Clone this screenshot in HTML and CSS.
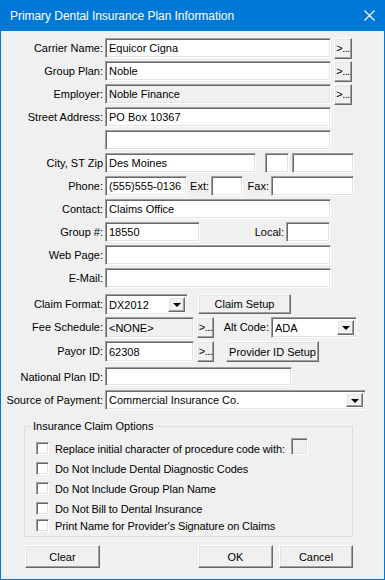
FILE: index.html
```html
<!DOCTYPE html>
<html lang="en">
<head>
    <meta charset="UTF-8">
    <title>Primary Dental Insurance Plan Information</title>
    <link rel="stylesheet" href="styles.css">
</head>
<body>
    <div class="window">
        <div class="titlebar">
            <span class="title">Primary Dental Insurance Plan Information</span>
            <svg class="close" width="11" height="11" viewBox="0 0 11 11">
                <path d="M0.5 0.5L10.5 10.5M10.5 0.5L0.5 10.5" stroke="#fff" stroke-width="1.1" fill="none"/>
            </svg>
        </div>

        <div class="content">
            <div class="row">
                <span class="lbl">Carrier Name:</span>
                <div class="field w-wide">Equicor Cigna</div>
                <div class="btn more">&gt;...</div>
            </div>
            <div class="row">
                <span class="lbl">Group Plan:</span>
                <div class="field w-wide">Noble</div>
                <div class="btn more">&gt;...</div>
            </div>
            <div class="row">
                <span class="lbl">Employer:</span>
                <div class="field w-wide disabled">Noble Finance</div>
                <div class="btn more">&gt;...</div>
            </div>
            <div class="row">
                <span class="lbl">Street Address:</span>
                <div class="field w-wide">PO Box 10367</div>
            </div>
            <div class="row">
                <span class="lbl"></span>
                <div class="field w-wide"></div>
            </div>
            <div class="row">
                <span class="lbl">City, ST Zip</span>
                <div class="field w-city">Des Moines</div>
                <div class="field w-st"></div>
                <div class="field w-zip"></div>
            </div>
            <div class="row">
                <span class="lbl">Phone:</span>
                <div class="field w-phone">(555)555-0136</div>
                <span class="ilbl l-ext">Ext:</span>
                <div class="field w-ext"></div>
                <span class="ilbl l-fax">Fax:</span>
                <div class="field w-fax"></div>
            </div>
            <div class="row">
                <span class="lbl">Contact:</span>
                <div class="field w-wide">Claims Office</div>
            </div>
            <div class="row">
                <span class="lbl">Group #:</span>
                <div class="field w-group">18550</div>
                <span class="ilbl l-local">Local:</span>
                <div class="field w-local"></div>
            </div>
            <div class="row">
                <span class="lbl">Web Page:</span>
                <div class="field w-wide"></div>
            </div>
            <div class="row">
                <span class="lbl">E-Mail:</span>
                <div class="field w-wide"></div>
            </div>

            <div class="row r-claim">
                <span class="lbl">Claim Format:</span>
                <div class="field combo w-claim">DX2012<div class="btn drop"><span class="arrow"></span></div></div>
                <div class="btn w-setup b-claim">Claim Setup</div>
            </div>
            <div class="row r-fee">
                <span class="lbl">Fee Schedule:</span>
                <div class="field disabled w-fee">&lt;NONE&gt;</div>
                <div class="btn more sm">&gt;...</div>
                <span class="ilbl l-alt">Alt Code:</span>
                <div class="field combo w-alt">ADA<div class="btn drop"><span class="arrow"></span></div></div>
            </div>
            <div class="row r-payor">
                <span class="lbl">Payor ID:</span>
                <div class="field w-fee">62308</div>
                <div class="btn more sm">&gt;...</div>
                <div class="btn w-setup b-provider">Provider ID Setup</div>
            </div>
            <div class="row r-npi">
                <span class="lbl">National Plan ID:</span>
                <div class="field w-npi"></div>
            </div>
            <div class="row r-source">
                <span class="lbl">Source of Payment:</span>
                <div class="field combo w-source">Commercial Insurance Co.<div class="btn drop"><span class="arrow"></span></div></div>
            </div>

            <fieldset class="group">
                <legend>Insurance Claim Options</legend>
                <div class="check c1">
                    <span class="box"></span>
                    <span>Replace initial character of procedure code with:</span>
                    <div class="field w-char"></div>
                </div>
                <div class="check c2">
                    <span class="box"></span>
                    <span>Do Not Include Dental Diagnostic Codes</span>
                </div>
                <div class="check c2">
                    <span class="box"></span>
                    <span>Do Not Include Group Plan Name</span>
                </div>
                <div class="check c2">
                    <span class="box"></span>
                    <span>Do Not Bill to Dental Insurance</span>
                </div>
                <div class="check c5">
                    <span class="box"></span>
                    <span>Print Name for Provider's Signature on Claims</span>
                </div>
            </fieldset>

            <div class="actions">
                <div class="btn big b-clear">Clear</div>
                <div class="btn big b-ok">OK</div>
                <div class="btn big b-cancel">Cancel</div>
            </div>
        </div>
    </div>
</body>
</html>
```

FILE: styles.css
```css
* {
    box-sizing: border-box;
}

body {
    margin: 0;
    background: #f0f0f0;
    font-family: 'Liberation Sans', Arial, sans-serif;
    font-size: 11px;
    color: #000;
}

.window {
    width: 385px;
    height: 580px;
    border: 1px solid #0078d7;
    border-top: none;
    background: #f0f0f0;
    overflow: hidden;
}

.titlebar {
    height: 31px;
    margin: 0 -1px;
    background: #0078d7;
    color: #fff;
    display: flex;
    align-items: center;
    padding: 0 10px;
}

.title {
    flex: 1;
    font-size: 12px;
    letter-spacing: -0.05px;
}

.content {
    padding-top: 7px;
}

.row {
    display: flex;
    align-items: flex-start;
    height: 20px;
    margin-top: 3px;
}

.row:first-child {
    margin-top: 0;
}

.lbl {
    width: 104px;
    height: 100%;
    padding-right: 2px;
    text-align: right;
    line-height: 20px;
    white-space: nowrap;
}

.ilbl {
    height: 100%;
    line-height: 20px;
    text-align: right;
    padding-right: 2px;
    white-space: nowrap;
}

/* sunken edit box */
.field {
    height: 100%;
    background: #fff;
    border: 1px solid;
    border-color: #a0a0a0 #fff #fff #a0a0a0;
    box-shadow: inset 1px 1px 0 #696969, inset -1px -1px 0 #e3e3e3;
    padding: 0 3px;
    display: flex;
    align-items: center;
    white-space: nowrap;
    overflow: hidden;
    position: relative;
}

.field.disabled {
    background: #f0f0f0;
}

/* raised button */
.btn {
    background: #f0f0f0;
    border: 1px solid;
    border-color: #fff #696969 #696969 #fff;
    box-shadow: inset -1px -1px 0 #a0a0a0, inset 1px 1px 0 #e3e3e3;
    display: flex;
    align-items: center;
    justify-content: center;
    white-space: nowrap;
}

.more {
    width: 18px;
    height: 21px;
    margin-left: 3px;
    letter-spacing: -0.5px;
    padding-bottom: 1px;
}

.more.sm {
    width: 17px;
}

.w-wide { width: 226px; }
.w-city { width: 151px; }
.w-st { width: 24px; margin-left: 9px; }
.w-zip { width: 62px; margin-left: 3px; }
.w-phone { width: 82px; }
.l-ext { width: 24px; }
.w-ext { width: 32px; }
.l-fax { width: 28px; }
.w-fax { width: 83px; }
.w-group { width: 95px; }
.l-local { width: 86px; }
.w-local { width: 44px; }

.r-claim { margin-top: 6px; height: 21px; }
.r-fee { margin-top: 2px; height: 21px; }
.r-payor { margin-top: 3px; height: 21px; }
.r-npi { margin-top: 5px; height: 19px; }
.r-source { margin-top: 4px; height: 20px; }

.combo {
    padding-right: 2px;
}

.combo .drop {
    position: absolute;
    top: 2px;
    right: 2px;
    bottom: 2px;
    width: 17px;
}

.arrow {
    width: 0;
    height: 0;
    border-left: 4px solid transparent;
    border-right: 4px solid transparent;
    border-top: 4px solid #000;
    margin-top: 1px;
}

.w-claim { width: 83px; }
.w-setup { width: 93px; }
.b-claim { height: 20px; margin-left: 10px; }
.w-fee { width: 89px; }
.l-alt { width: 57px; }
.w-alt { width: 86px; }
.b-provider { height: 21px; margin-left: 12px; }
.w-npi { width: 187px; }
.w-source { width: 261px; }

.group {
    margin: 10px 0 0 23px;
    width: 329px;
    padding: 0 0 4px 11px;
    border: 1px solid #dcdcdc;
}

.group legend {
    margin-left: -5px;
    padding: 0 2px;
    line-height: 12px;
}

.check {
    display: flex;
    align-items: center;
    height: 13px;
    white-space: nowrap;
    letter-spacing: -0.1px;
}

.c1 { margin-top: 10px; }
.c2 { margin-top: 7px; }
.c5 { margin-top: 4px; }

.box {
    width: 13px;
    height: 13px;
    margin-right: 6px;
    background: #fff;
    border: 1px solid;
    border-color: #a0a0a0 #fff #fff #a0a0a0;
    box-shadow: inset 1px 1px 0 #696969, inset -1px -1px 0 #e3e3e3;
}

.w-char {
    width: 17px;
    height: 17px;
    margin-left: 6px;
    margin-top: -4px;
    background: #f0f0f0;
}

.actions {
    display: flex;
    margin-top: 8px;
}

.big {
    height: 23px;
    width: 75px;
}

.b-clear { margin-left: 24px; }
.b-ok { margin-left: 98px; }
.b-cancel { margin-left: 6px; width: 74px; }
```
